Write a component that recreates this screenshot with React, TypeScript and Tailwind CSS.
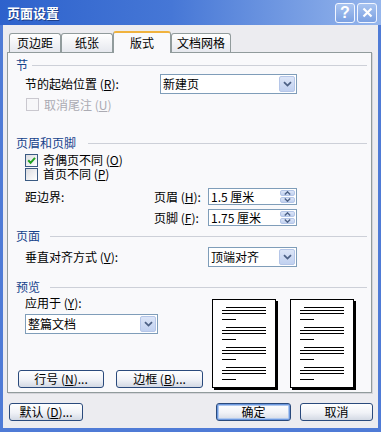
import React from "react";

const F = "font-['SimSun','Noto_Sans_CJK_SC',sans-serif]";

function Chevron() {
  return (
    <svg width="9" height="6" viewBox="0 0 9 6">
      <path d="M1 1.2 L4.5 4.6 L8 1.2" stroke="#4D6185" strokeWidth="1.8" fill="none" />
    </svg>
  );
}

function Combo({ className, text }: { className: string; text: string }) {
  return (
    <div className={`flex items-stretch border border-[#7F9DB9] bg-white ${className}`}>
      <span className="flex-1 flex items-center pl-[2px] text-[12px] leading-none text-black">{text}</span>
      <span className="w-[16px] m-px rounded-[2px] border border-[#B5C6E8] bg-[linear-gradient(to_bottom,#DCE5F7,#C1D1F0)] flex items-center justify-center">
        <Chevron />
      </span>
    </div>
  );
}

function Spin({ text }: { text: string }) {
  return (
    <div className="flex items-stretch border border-[#7F9DB9] bg-white w-[89px] h-[17px]">
      <span className="flex-1 flex items-center pl-[2px] text-[12px] leading-none text-black">{text}</span>
      <span className="w-[15px] m-px flex flex-col gap-px">
        <span className="flex-1 rounded-[2px] border border-[#B5C6E8] bg-[linear-gradient(to_bottom,#DCE5F7,#C1D1F0)] flex items-center justify-center">
          <svg width="7" height="4" viewBox="0 0 7 4">
            <path d="M0.8 3.4 L3.5 0.8 L6.2 3.4" stroke="#4D6185" strokeWidth="1.4" fill="none" />
          </svg>
        </span>
        <span className="flex-1 rounded-[2px] border border-[#B5C6E8] bg-[linear-gradient(to_bottom,#DCE5F7,#C1D1F0)] flex items-center justify-center">
          <svg width="7" height="4" viewBox="0 0 7 4">
            <path d="M0.8 0.6 L3.5 3.2 L6.2 0.6" stroke="#4D6185" strokeWidth="1.4" fill="none" />
          </svg>
        </span>
      </span>
    </div>
  );
}

function Check({ checked, disabled }: { checked?: boolean; disabled?: boolean }) {
  return (
    <span
      className={`w-[13px] h-[13px] border flex items-center justify-center ${
        disabled
          ? "border-[#CAC8CF] bg-[#F7F7F9]"
          : "border-[#3A5A82] bg-[linear-gradient(135deg,#DCDCE0,#FFFFFF)]"
      }`}
    >
      {checked && (
        <svg width="9" height="9" viewBox="0 0 9 9">
          <path d="M1.2 4.2 L3.6 6.8 L8 1.8" stroke="#21A121" strokeWidth="2" fill="none" />
        </svg>
      )}
    </span>
  );
}

function Header({ text, gap }: { text: string; gap: string }) {
  return (
    <div className="flex items-center h-[12px]">
      <span className="text-[12px] leading-none text-[#15428B]">{text}</span>
      <span className={`flex-1 h-px bg-[#CDD0D8] ${gap}`} />
    </div>
  );
}

function Btn({ children, className, def }: { children: React.ReactNode; className: string; def?: boolean }) {
  return (
    <div
      className={`h-[18px] rounded-[3px] border border-[#2A4A7C] bg-[linear-gradient(to_bottom,#FFFFFF,#F0F2F7_55%,#D3D9E4)] flex items-center justify-center text-[12px] leading-none text-black ${
        def ? "shadow-[inset_0_0_0_1px_#6C98DE,inset_0_0_0_2px_#AFC8EF]" : ""
      } ${className}`}
    >
      {children}
    </div>
  );
}

function Page() {
  const groups = [8, 28, 48, 68];
  return (
    <svg width="66" height="91" viewBox="0 0 66 91">
      <rect x="2" y="2" width="64" height="89" fill="#000" />
      <rect x="0.5" y="0.5" width="63" height="88" fill="#fff" stroke="#000" />
      {groups.map((g) => (
        <g key={g} stroke="#000" strokeWidth="1">
          <line x1="14" x2="54" y1={g + 0.5} y2={g + 0.5} />
          <line x1="10" x2="54" y1={g + 3.5} y2={g + 3.5} />
          <line x1="10" x2="54" y1={g + 6.5} y2={g + 6.5} />
          <line x1="10" x2="24" y1={g + 12.5} y2={g + 12.5} />
        </g>
      ))}
    </svg>
  );
}

export default function App() {
  return (
    <div className={`w-[381px] h-[432px] bg-[#4F7BD6] flex flex-col ${F}`}>
      {/* title bar */}
      <div className="h-[25px] flex items-center pl-[7px] pr-[4px] bg-[linear-gradient(to_right,#2D62CC,#4677D6_45%,#96B6EC)]">
        <span className="flex-1 text-white font-bold text-[13px] leading-none [text-shadow:1px_1px_0_#1C3E8A]">页面设置</span>
        <div className="flex gap-[2px]">
          <div className="w-[20px] h-[20px] rounded-[3px] border border-[#F2F6FF] bg-[linear-gradient(to_bottom,#A9C4F0,#7CA1E2)] flex items-center justify-center">
            <span className="text-white font-bold text-[16px] leading-none font-['Liberation_Sans',sans-serif]">?</span>
          </div>
          <div className="w-[20px] h-[20px] rounded-[3px] border border-[#F2F6FF] bg-[linear-gradient(to_bottom,#A9C4F0,#7CA1E2)] flex items-center justify-center">
            <svg width="11" height="11" viewBox="0 0 11 11">
              <path d="M1.5 1.5 L9.5 9.5 M9.5 1.5 L1.5 9.5" stroke="#fff" strokeWidth="2.2" />
            </svg>
          </div>
        </div>
      </div>

      {/* body */}
      <div className="flex-1 mx-[3px] mb-[4px] bg-[#ECECF0] pt-[6px] pl-[4px] pr-[5px] flex flex-col">
        {/* tabs */}
        <div className="flex items-end h-[21px] pl-[2px] relative z-10">
          <div className="w-[52px] h-[19px] rounded-t-[3px] border-t border-l border-r border-[#919B9C] bg-[linear-gradient(to_bottom,#FFFFFF,#E6E8EE)] flex items-center justify-center text-[12px] leading-none text-black">
            页边距
          </div>
          <div className="w-[52px] h-[19px] rounded-t-[3px] border-t border-l border-r border-[#919B9C] bg-[linear-gradient(to_bottom,#FFFFFF,#E6E8EE)] flex items-center justify-center text-[12px] leading-none text-black">
            纸张
          </div>
          <div className="w-[58px] h-[22px] -mb-px rounded-t-[3px] border-t-2 border-t-[#F0B23E] border-l border-r border-[#919B9C] bg-[#F9F9FB] flex items-center justify-center text-[12px] leading-none text-black">
            版式
          </div>
          <div className="w-[60px] h-[19px] rounded-t-[3px] border-t border-l border-r border-[#919B9C] bg-[linear-gradient(to_bottom,#FFFFFF,#E6E8EE)] flex items-center justify-center text-[12px] leading-none text-black">
            文档网格
          </div>
        </div>

        {/* panel */}
        <div className="w-[365px] h-[341px] border border-[#919B9C] bg-[#F9F9FB] pl-[8px] pr-[4px] flex flex-col shadow-[1px_1px_0_#D4D4DA]">
          <div className="mt-[6px]">
            <Header text="节" gap="ml-[4px]" />
          </div>
          <div className="mt-[3px] flex items-center h-[20px]">
            <span className="w-[144px] pl-[9px] text-[12px] leading-none text-black">
              节的起始位置 (<u>R</u>):
            </span>
            <Combo className="w-[137px] h-[20px]" text="新建页" />
          </div>
          <div className="mt-[4px] flex items-center h-[13px] pl-[10px] gap-[5px]">
            <Check disabled />
            <span className="text-[12px] leading-none text-[#ABABB3]">
              取消尾注 (<u>U</u>)
            </span>
          </div>

          <div className="mt-[26px]">
            <Header text="页眉和页脚" gap="ml-[12px]" />
          </div>
          <div className="mt-[4px] flex items-center h-[14px] pl-[9px] gap-[5px]">
            <Check checked />
            <span className="text-[12px] leading-none text-black">
              奇偶页不同 (<u>O</u>)
            </span>
          </div>
          <div className="flex items-center h-[14px] pl-[9px] gap-[5px]">
            <Check />
            <span className="text-[12px] leading-none text-black">
              首页不同 (<u>P</u>)
            </span>
          </div>
          <div className="mt-[7px] flex items-center h-[17px]">
            <span className="w-[138px] pl-[9px] text-[12px] leading-none text-black">距边界:</span>
            <span className="w-[54px] text-[12px] leading-none text-black">
              页眉 (<u>H</u>):
            </span>
            <Spin text="1.5 厘米" />
          </div>
          <div className="mt-[4px] flex items-center h-[17px]">
            <span className="w-[138px]" />
            <span className="w-[54px] text-[12px] leading-none text-black">
              页脚 (<u>F</u>):
            </span>
            <Spin text="1.75 厘米" />
          </div>

          <div className="mt-[4px]">
            <Header text="页面" gap="ml-[10px]" />
          </div>
          <div className="mt-[5px] flex items-center h-[20px]">
            <span className="w-[192px] pl-[9px] text-[12px] leading-none text-black">
              垂直对齐方式 (<u>V</u>):
            </span>
            <Combo className="w-[89px] h-[20px]" text="顶端对齐" />
          </div>

          <div className="mt-[14px]">
            <Header text="预览" gap="ml-[10px]" />
          </div>
          <div className="flex">
            <div className="w-[196px] flex flex-col">
              <span className="mt-[4px] h-[12px] pl-[9px] text-[12px] leading-none text-black">
                应用于 (<u>Y</u>):
              </span>
              <div className="mt-[5px] pl-[9px]">
                <Combo className="w-[133px] h-[20px]" text="整篇文档" />
              </div>
              <div className="mt-[36px] pl-[2px] flex gap-[12px]">
                <Btn className="w-[86px]">
                  行号 (<u>N</u>)...
                </Btn>
                <Btn className="w-[87px]">
                  边框 (<u>B</u>)...
                </Btn>
              </div>
            </div>
            <div className="mt-[6px] flex gap-[12px]">
              <Page />
              <Page />
            </div>
          </div>
        </div>

        {/* bottom buttons */}
        <div className="mt-[10px] flex items-center">
          <Btn className="w-[74px] ml-[2px]">
            默认 (<u>D</u>)...
          </Btn>
          <div className="flex-1" />
          <Btn className="w-[75px]" def>
            确定
          </Btn>
          <Btn className="w-[73px] ml-[9px]">取消</Btn>
        </div>
      </div>
    </div>
  );
}
